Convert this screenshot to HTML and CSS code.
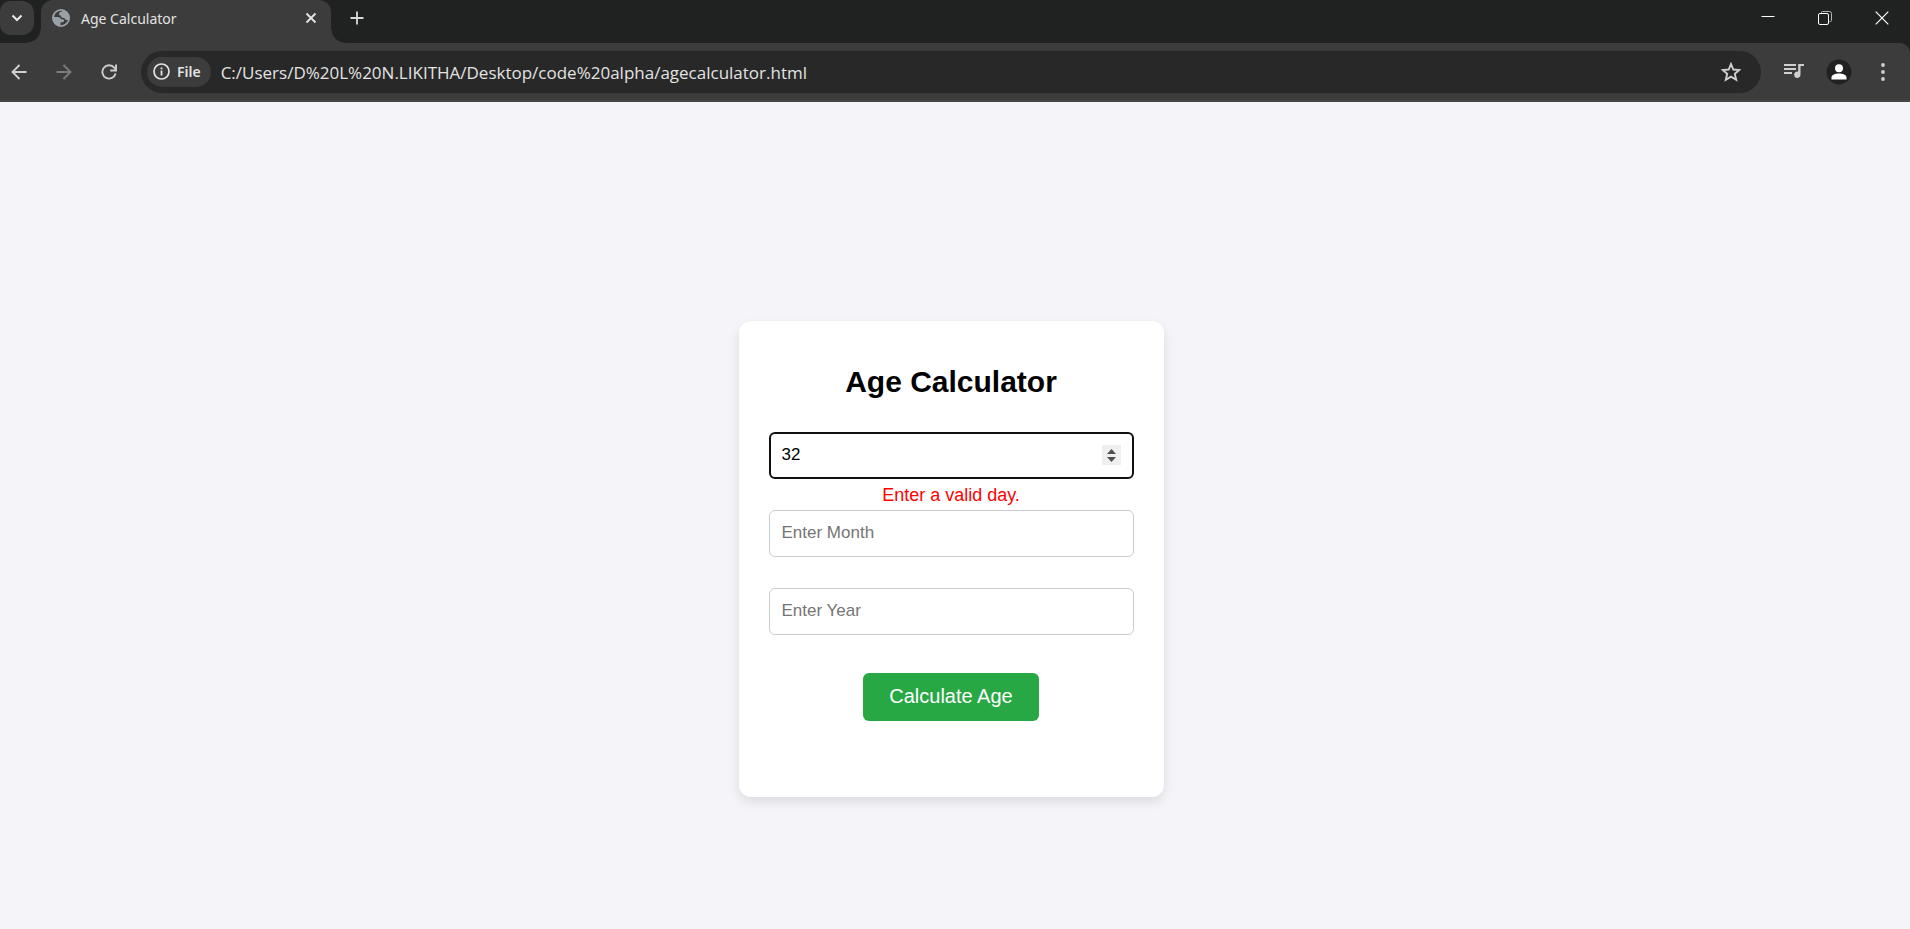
FILE: index.html
```
<!DOCTYPE html>
<html lang="en">
<head>
<meta charset="utf-8">
<title>Age Calculator</title>
<link rel="stylesheet" href="styles.css">
</head>
<body>
<header class="browser">
  <div class="tabstrip">
    <button class="tab-search" type="button" aria-label="Search tabs">
      <svg width="12" height="8" viewBox="0 0 12 8"><path d="M1.500 1.500 6 6l4.500-4.500" fill="none" stroke="#e3e3e3" stroke-width="2.200"/></svg>
    </button>
    <div class="tab">
      <svg class="globe" width="18" height="18" viewBox="0 0 18 18"><circle cx="9" cy="9" r="8.100" fill="none" stroke="#9aa0a6" stroke-width="1.800"/><path d="M10 1v1.500c-2 .3-3 1.200-3 2.500 0 1 .7 1.500 1.700 1.500.4 1.700 1.200 2.500 2.800 2.500h.8c.3 1.300 1.200 2 2.500 2H17c.8-5-2-9.500-7-10z" fill="#9aa0a6"/><path d="M1 8h4.500c2 0 3.200.8 3.500 2.300h1.500c1 0 1.500.6 1.500 1.400 0 1-.7 1.500-1.700 1.500H9.500c-.6 0-1 .4-1 1V17C4 17 .7 13 1 8z" fill="#9aa0a6"/></svg>
      <span class="tab-title">Age Calculator</span>
      <button class="icon-button" type="button" aria-label="Close tab">
        <svg width="12" height="12" viewBox="0 0 12 12"><path d="m1.500 1.500 9 9m0-9-9 9" fill="none" stroke="#e3e3e3" stroke-width="1.900"/></svg>
      </button>
    </div>
    <button class="icon-button new-tab" type="button" aria-label="New tab">
      <svg width="14" height="14" viewBox="0 0 14 14"><path d="M7 .5v13M.5 7h13" fill="none" stroke="#dadada" stroke-width="1.800"/></svg>
    </button>
    <div class="window-controls">
      <button class="icon-button" type="button" aria-label="Minimize"><svg width="14" height="14" viewBox="0 0 14 14"><path d="M.5 5.500h13" stroke="#fff"/></svg></button>
      <button class="icon-button" type="button" aria-label="Restore"><svg width="14" height="14" viewBox="0 0 14 14"><path d="M3.500 2.500v-1q0-1 1-1h7q2 0 2 2v7q0 1-1 1h-1" fill="none" stroke="#b5b5b5"/><rect x=".5" y="2.500" width="10" height="11" rx="1.500" fill="none" stroke="#fff"/></svg></button>
      <button class="icon-button" type="button" aria-label="Close window"><svg width="14" height="14" viewBox="0 0 14 14"><path d="m.7.7 12.600 12.600m0-12.600L.7 13.300" stroke="#fff" stroke-width="1.200"/></svg></button>
    </div>
  </div>
  <div class="toolbar">
    <nav class="history">
      <button class="icon-button" type="button" aria-label="Back"><svg width="16" height="16" viewBox="0 0 16 16"><path d="M15.500 8H1.500M8.500 1l-7 7 7 7" fill="none" stroke="#cfcfcf" stroke-width="1.900"/></svg></button>
      <button class="icon-button" type="button" aria-label="Forward"><svg width="16" height="16" viewBox="0 0 16 16"><path d="M.5 8h14M7.500 1l7 7-7 7" fill="none" stroke="#7c7c7c" stroke-width="1.900"/></svg></button>
      <button class="icon-button" type="button" aria-label="Reload"><svg width="16" height="16" viewBox="0 0 16 16"><path d="M14.600 9.500A6.700 6.700 0 1 1 13.300 3.700L14.500 5" fill="none" stroke="#cfcfcf" stroke-width="1.900"/><path d="M15.100.5v6H9.200" fill="none" stroke="#cfcfcf" stroke-width="1.900"/></svg></button>
    </nav>
    <div class="omnibox">
      <button class="file-chip" type="button">
        <svg width="17" height="17" viewBox="0 0 17 17"><circle cx="8.500" cy="8.500" r="7.500" fill="none" stroke="#e3e3e3" stroke-width="1.700"/><path d="M8.500 7.500v5M8.500 4.400v1.800" stroke="#e3e3e3" stroke-width="1.800"/></svg>
        File
      </button>
      <input class="url" type="text" aria-label="Address" value="C:/Users/D%20L%20N.LIKITHA/Desktop/code%20alpha/agecalculator.html">
      <button class="icon-button" type="button" aria-label="Bookmark this page"><svg width="20" height="20" viewBox="0 0 20 20"><path d="m10 2 2.300 5.500 6 .5-4.500 3.900 1.400 5.800-5.200-3.100-5.200 3.100 1.400-5.800L1.700 8l6-.5z" fill="none" stroke="#cfcfcf" stroke-width="1.900"/></svg></button>
    </div>
    <div class="actions">
      <button class="icon-button" type="button" aria-label="Media controls"><svg width="20" height="18" viewBox="0 0 20 18"><path d="M0 2h12M0 6h12M0 10h8" stroke="#cfcfcf" stroke-width="1.800"/><path d="M14.200 1H20v2h-3.500v8.700a3.200 3.200 0 1 1-2.300-3z" fill="#cfcfcf"/></svg></button>
      <button class="icon-button" type="button" aria-label="Profile"><svg width="26" height="26" viewBox="0 0 26 26"><circle cx="13" cy="13" r="12.500" fill="#202221"/><circle cx="13" cy="9.200" r="4" fill="#fff"/><path d="M5.500 20.500v-2c0-2.800 4-4 7.500-4s7.500 1.200 7.500 4v2z" fill="#fff"/></svg></button>
      <button class="icon-button" type="button" aria-label="Menu"><svg width="6" height="18" viewBox="0 0 6 18"><g fill="#cfcfcf"><circle cx="3" cy="2" r="1.900"/><circle cx="3" cy="9" r="1.900"/><circle cx="3" cy="16" r="1.900"/></g></svg></button>
    </div>
  </div>
</header>
<main class="page">
  <form class="card" novalidate>
    <h1 class="title">Age Calculator</h1>
    <input class="field is-active" type="number" aria-label="Day" aria-describedby="day-error" placeholder="Enter Day" value="32">
    <p class="error" id="day-error">Enter a valid day.</p>
    <input class="field" type="number" aria-label="Month" placeholder="Enter Month">
    <p class="error"></p>
    <input class="field" type="number" aria-label="Year" placeholder="Enter Year">
    <p class="error"></p>
    <button class="submit" type="button">Calculate Age</button>
  </form>
</main>
</body>
</html>
```
FILE: styles.css
```
* {
  box-sizing: border-box;
}

body {
  margin: 0;
  min-height: 100vh;
  display: flex;
  flex-direction: column;
  background: #f4f4f9;
  font-family: "Liberation Sans", Arial, sans-serif;
}

button,
input {
  font: inherit;
}

svg {
  display: block;
}

/* Browser frame */
.browser {
  background: #202221;
  color: #e3e3e3;
  font-family: "Noto Sans", "Open Sans", sans-serif;
}

.tabstrip {
  display: flex;
  height: 43px;
}

.tab-search {
  width: 34px;
  height: 34px;
  margin-top: 1px;
  padding: 0 0 0 11px;
  border: 0;
  border-radius: 10px 12px 12px 10px;
  background: #3c3c3c;
}

.tab {
  position: relative;
  display: flex;
  align-items: center;
  width: 290px;
  margin-left: 7px;
  padding: 0 14px 7px 11px;
  border-radius: 12px 12px 0 0;
  background: #3c3c3c;
}

.tab::before,
.tab::after {
  content: "";
  position: absolute;
  bottom: 0;
  width: 14px;
  height: 14px;
}

.tab::before {
  right: 100%;
  background: radial-gradient(circle at 0 0, transparent 13px, #3c3c3c 14px);
}

.tab::after {
  left: 100%;
  background: radial-gradient(circle at 100% 0, transparent 13px, #3c3c3c 14px);
}

.tab-title {
  flex: 1;
  margin-left: 11px;
  font-size: 14px;
}

.icon-button {
  display: grid;
  place-items: center;
  padding: 0;
  border: 0;
  background: none;
}

.new-tab {
  width: 30px;
  height: 36px;
  margin-left: 11px;
}

.window-controls {
  display: flex;
  gap: 43px;
  height: 35px;
  margin-left: auto;
  padding-right: 21px;
}

.toolbar {
  display: flex;
  align-items: center;
  height: 59px;
  border-bottom: 2px solid #464646;
  border-radius: 0 10px 0 0;
  background: #3c3c3c;
}

.history {
  display: flex;
  gap: 29px;
  width: 141px;
  padding-left: 11px;
}

.omnibox {
  flex: 1;
  display: flex;
  align-items: center;
  height: 42px;
  padding: 0 20px 0 6px;
  border-radius: 21px;
  background: #282828;
}

.file-chip {
  display: flex;
  align-items: center;
  gap: 7px;
  height: 30px;
  padding: 0 10px 0 6px;
  border: 0;
  border-radius: 15px;
  background: #3c3c3c;
  color: #e3e3e3;
  font-size: 14px;
  font-weight: 600;
}

.url {
  flex: 1;
  min-width: 0;
  padding: 1px 0 0;
  margin-left: 10px;
  border: 0;
  outline: 0;
  background: none;
  color: #e3e3e3;
  font-family: "Open Sans", "Noto Sans", sans-serif;
  font-size: 17px;
}

.actions {
  display: flex;
  align-items: center;
  gap: 22px;
  padding: 0 24px 0 23px;
}

.actions .icon-button:last-child {
  margin-left: 6px;
}

/* Calculator */
.page {
  flex: 1;
  display: flex;
  justify-content: center;
  align-items: center;
  padding: 86px 8px 0 0;
}

.card {
  width: 425px;
  padding: 30px;
  border-radius: 12px;
  background: #fff;
  box-shadow: 0 5px 12px rgba(0, 0, 0, 0.1);
  text-align: center;
}

.title {
  margin: 14px 0 33px;
  font-size: 30px;
  line-height: 34px;
}

.field {
  display: block;
  width: 100%;
  height: 47px;
  padding: 0 12px 1px;
  border: 1px solid #ccc;
  border-radius: 6px;
  background: #fff;
  color: #000;
  font-size: 17px;
}

.field::placeholder {
  color: #757575;
}

.field.is-active {
  padding: 0 11px 1px;
  border: 2px solid #101010;
}

.field.is-active::-webkit-inner-spin-button {
  appearance: none;
  width: 19px;
  height: 20px;
  opacity: 1;
  background: #efefef url("data:image/svg+xml,%3Csvg xmlns='http://www.w3.org/2000/svg' width='19' height='20'%3E%3Cpath d='M5 9l4.500-5 4.500 5zM5 12l4.500 5 4.500-5z' fill='%23505050'/%3E%3C/svg%3E") center no-repeat;
}

.error {
  height: 31px;
  margin: 0;
  color: #f00;
  font-size: 18px;
  line-height: 32px;
}

.submit {
  height: 48px;
  margin: 7px 0 46px;
  padding: 0 26px 1px;
  border: 0;
  border-radius: 6px;
  background: #28a745;
  color: #fff;
  font-size: 20px;
  vertical-align: top;
}
```
